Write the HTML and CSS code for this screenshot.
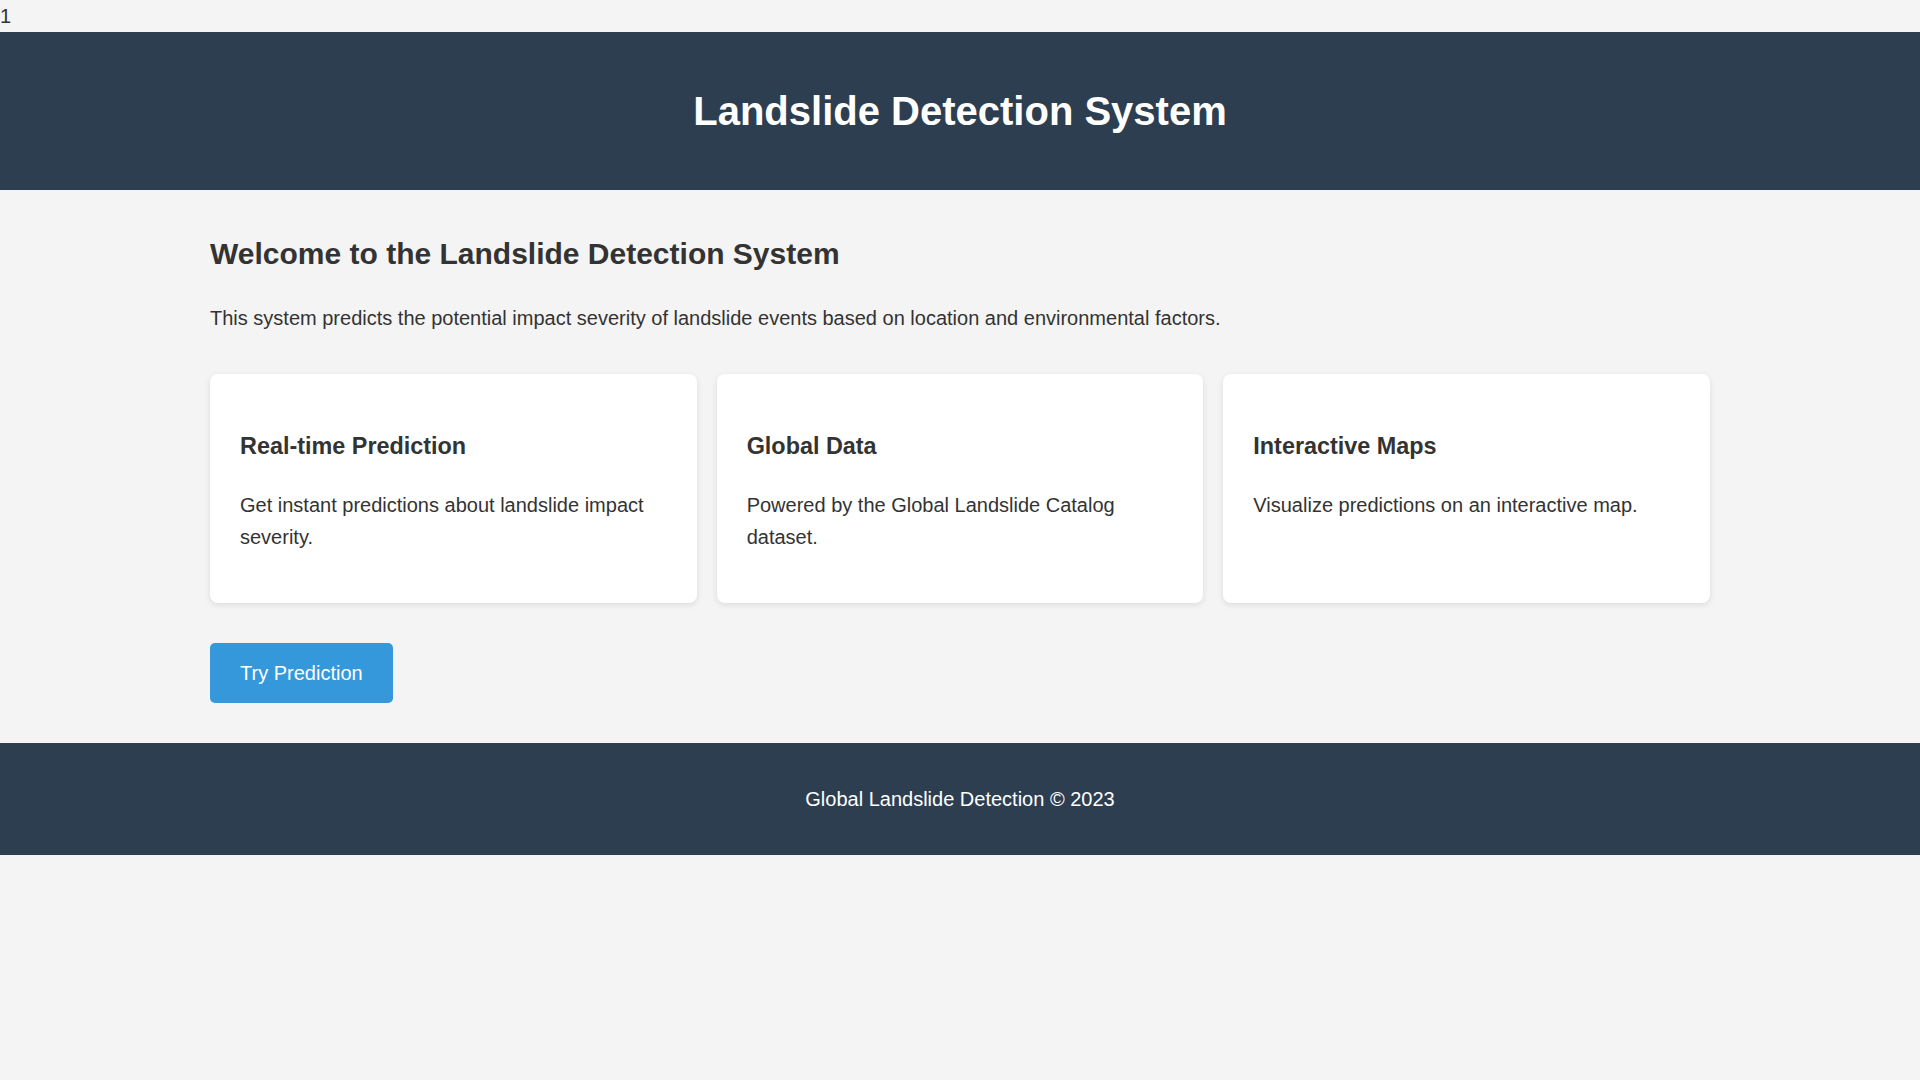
FILE: index.html
```html
<!DOCTYPE html>
<html lang="en">
<head>
<meta charset="utf-8">
<title>Landslide Detection System</title>
<link rel="stylesheet" href="styles.css">
</head>
<body>
<div class="stray">1</div>
<header class="site-header">
  <h1 class="site-title">Landslide Detection System</h1>
</header>
<main class="container">
  <h2 class="welcome">Welcome to the Landslide Detection System</h2>
  <p class="intro">This system predicts the potential impact severity of landslide events based on location and environmental factors.</p>
  <section class="features">
    <div class="card">
      <h3 class="card-title">Real-time Prediction</h3>
      <p class="card-text">Get instant predictions about landslide impact severity.</p>
    </div>
    <div class="card">
      <h3 class="card-title">Global Data</h3>
      <p class="card-text">Powered by the Global Landslide Catalog dataset.</p>
    </div>
    <div class="card">
      <h3 class="card-title">Interactive Maps</h3>
      <p class="card-text">Visualize predictions on an interactive map.</p>
    </div>
  </section>
  <a class="btn" href="#">Try Prediction</a>
</main>
<footer class="site-footer">
  <p class="footer-text">Global Landslide Detection &copy; 2023</p>
</footer>
</body>
</html>
```
FILE: styles.css
```css
html {
  font-size: 20px;
}
body {
  margin: 0;
  padding: 0;
  font-family: "Liberation Sans", Arial, sans-serif;
  font-size: 20px;
  line-height: 1.6;
  color: #333;
  background: #f4f4f4;
}
.stray {
  line-height: 32px;
}
.site-header {
  background: #2c3e50;
  color: #fff;
  padding: 20px;
  text-align: center;
}
.site-title {
  font-size: 40px;
  margin: 26.8px 0;
  font-weight: bold;
}
.container {
  max-width: 1500px;
  margin: 40px auto;
}
.welcome {
  font-size: 30px;
  margin: 24.9px 0;
}
.intro {
  margin: 20px 0;
}
.features {
  display: grid;
  grid-template-columns: repeat(3, 1fr);
  gap: 20px;
  margin: 40px 0;
}
.card {
  background: #fff;
  border-radius: 8px;
  padding: 30px;
  box-shadow: 0 2px 6px rgba(0, 0, 0, 0.1);
}
.card-title {
  font-size: 23.4px;
  margin: 23.4px 0;
}
.card-text {
  margin: 20px 0;
}
.btn {
  display: inline-block;
  background: #3498db;
  color: #fff;
  text-decoration: none;
  padding: 14px 30px;
  line-height: 32px;
  border-radius: 5px;
}
.site-footer {
  background: #2c3e50;
  color: #fff;
  text-align: center;
  padding: 20px;
}
.footer-text {
  margin: 20px 0;
}
```
